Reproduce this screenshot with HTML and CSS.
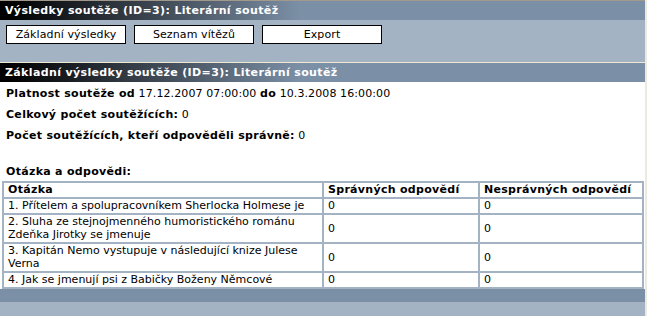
FILE: index.html
```html
<!DOCTYPE html>
<html lang="cs">
<head>
<meta charset="utf-8">
<title>Výsledky soutěže</title>
<link rel="stylesheet" href="styles.css">
</head>
<body>
<div class="page">
  <div class="topline"></div>
  <div class="bar">Výsledky soutěže (ID=3): Literární soutěž</div>
  <div class="toolbar">
    <button class="btn" type="button">Základní výsledky</button>
    <button class="btn" type="button">Seznam vítězů</button>
    <button class="btn" type="button">Export</button>
  </div>
  <div class="sep"></div>
  <div class="bar">Základní výsledky soutěže (ID=3): Literární soutěž</div>
  <div class="content">
    <p class="line"><b>Platnost soutěže od</b> 17.12.2007 07:00:00 <b>do</b> 10.3.2008 16:00:00</p>
    <p class="line"><b>Celkový počet soutěžících:</b> 0</p>
    <p class="line"><b>Počet soutěžících, kteří odpověděli správně:</b> 0</p>
    <p class="line subtitle"><b>Otázka a odpovědi:</b></p>
  </div>
  <table class="results">
    <thead>
      <tr><th class="c1">Otázka</th><th class="c2">Správných odpovědí</th><th class="c3">Nesprávných odpovědí</th></tr>
    </thead>
    <tbody>
      <tr><td>1. Přítelem a spolupracovníkem Sherlocka Holmese je</td><td>0</td><td>0</td></tr>
      <tr><td>2. Sluha ze stejnojmenného humoristického románu Zdeňka Jirotky se jmenuje</td><td>0</td><td>0</td></tr>
      <tr><td>3. Kapitán Nemo vystupuje v následující knize Julese Verna</td><td>0</td><td>0</td></tr>
      <tr><td>4. Jak se jmenují psi z Babičky Boženy Němcové</td><td>0</td><td>0</td></tr>
    </tbody>
  </table>
  <div class="footbar"></div>
  <div class="footlight"></div>
</div>
</body>
</html>
```
FILE: styles.css
```css
html {
  background: #eceae0;
}
body {
  margin: 0;
  font-family: Verdana, "DejaVu Sans", sans-serif;
  font-size: 11px;
  color: #000;
}
.page {
  width: 645px;
  background: #fff;
  min-height: 316px;
}
.topline {
  height: 1px;
  background: #a0998c;
}
.bar {
  height: 19px;
  line-height: 19px;
  padding-left: 5px;
  color: #fff;
  font-weight: bold;
  font-size: 11px;
  letter-spacing: 0.36px;
  white-space: nowrap;
  background: linear-gradient(to right, #000 0px, #000 10px, #7b8fa6 300px, #7b8fa6 100%);
}
.toolbar {
  height: 42px;
  box-sizing: border-box;
  padding: 5px 6px 0;
  background: #a4b3c4;
  display: flex;
  gap: 8px;
  align-items: flex-start;
}
.btn {
  width: 120px;
  height: 19px;
  margin: 0;
  padding: 0;
  background: #fff;
  border: 1px solid #000;
  font-family: Verdana, "DejaVu Sans", sans-serif;
  font-size: 11px;
  letter-spacing: 0.1px;
  color: #000;
}
.sep {
  height: 1px;
  background: #efe8d2;
}
.content {
  padding: 5px 6px 0;
}
.line {
  margin: 0 0 7px;
  line-height: 14px;
  white-space: nowrap;
  letter-spacing: 0.1px;
}
.line b {
  letter-spacing: 0.3px;
}
.subtitle {
  margin-top: 22px;
  margin-bottom: 2px;
}
.results {
  width: 642px;
  margin: 0 0 0 2px;
  border: 1px solid #a4b3c4;
  border-spacing: 0;
  font-size: 11px;
}
.results th,
.results td {
  border: 1px solid #a4b3c4;
  padding: 0 3px 1px 4px;
  line-height: 13px;
  text-align: left;
  vertical-align: middle;
}
.results th {
  letter-spacing: 0.3px;
}
.results .c1 { width: 311px; }
.results .c2 { width: 147px; }
.footbar {
  height: 13px;
  background: #7b8fa6;
}
.footlight {
  height: 16px;
  background: #a4b3c4;
}
```
